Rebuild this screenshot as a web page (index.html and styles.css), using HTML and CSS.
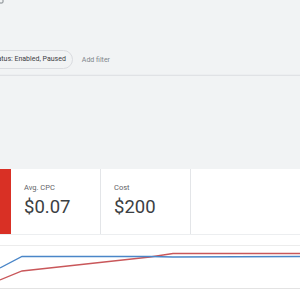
FILE: index.html
```html
<!DOCTYPE html>
<html lang="en">
<head>
  <title>Campaigns</title>
  <meta charset="UTF-8">
  <link rel="stylesheet" href="styles.css">
</head>
<body>
<div class="top">
  <div class="icon-row">
    <svg class="corner" width="6" height="6" viewBox="0 0 6 6">
      <path d="M3 0 V2 Q3 3 2 3 H0" fill="none" stroke="#80868b" stroke-width="1"/>
    </svg>
  </div>
  <div class="filters">
    <div class="chip">Status: Enabled, Paused</div>
    <div class="add-filter">Add filter</div>
  </div>
</div>
<div class="summary">
  <div class="scorecards">
    <div class="selected"></div>
    <div class="card">
      <p class="label">Avg. CPC</p>
      <p class="value">$0.07</p>
    </div>
    <div class="card">
      <p class="label">Cost</p>
      <p class="value">$200</p>
    </div>
  </div>
  <div class="chart">
    <svg width="300" height="55" viewBox="0 0 300 55">
      <line x1="0" y1="0.5" x2="300" y2="0.5" stroke="#ececec"/>
      <line x1="0" y1="43.5" x2="300" y2="43.5" stroke="#e3e3e3"/>
      <polyline points="0,35 22,26 150,12 173,8.5 300,8.5" fill="none" stroke="#c9575a" stroke-width="1.3"/>
      <polyline points="0,23 22,11.5 150,11.5 173,12 300,11.5" fill="none" stroke="#4a86c8" stroke-width="1.3"/>
    </svg>
  </div>
</div>
</body>
</html>
```

FILE: styles.css
```css
body {
  margin: 0;
  font-family: Roboto, "Noto Sans", sans-serif;
  background: #fff;
  overflow: hidden;
}

p {
  margin: 0;
}

.top {
  height: 169px;
  background: #f1f3f4;
}

.icon-row {
  height: 50px;
}

.corner {
  display: block;
}

.filters {
  display: flex;
  align-items: center;
  gap: 9px;
  padding-bottom: 6px;
  border-bottom: 1px solid #e0e2e5;
  box-shadow: 0 -3px 0 -2px #eceef0 inset;
}

.chip {
  height: 17px;
  line-height: 17px;
  margin-left: -18px;
  padding: 0 6px 0 8px;
  border: 1px solid #dadce0;
  border-radius: 10px;
  font-size: 7px;
  color: #3c4043;
  white-space: nowrap;
}

.add-filter {
  font-size: 7px;
  color: #80868b;
}

.scorecards {
  display: flex;
  height: 65px;
  border-bottom: 1px solid #eceef0;
}

.selected {
  width: 11px;
  background: #d93025;
}

.card {
  width: 76px;
  padding: 14px 0 0 13px;
  border-right: 1px solid #e3e5e8;
}

.card + .card {
  width: 76px;
}

.label {
  font-size: 7.5px;
  line-height: 10px;
  color: #5f6368;
}

.value {
  margin-top: 3px;
  font-size: 18.5px;
  line-height: 22px;
  color: #3c4043;
}

.chart {
  padding-top: 10px;
}

.chart svg {
  display: block;
}
```
